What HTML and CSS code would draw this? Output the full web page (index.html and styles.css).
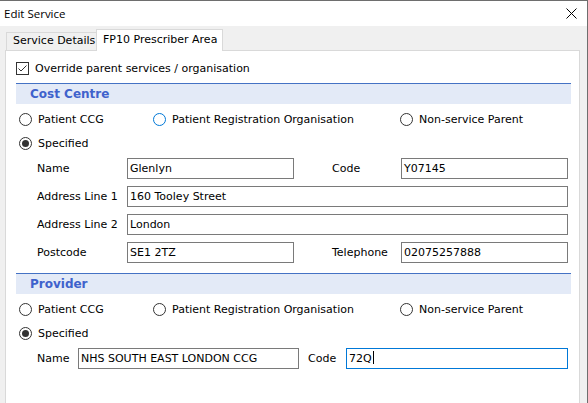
FILE: index.html
```html
<!DOCTYPE html>
<html>
<head>
<meta charset="utf-8">
<title>Edit Service</title>
<link rel="stylesheet" href="styles.css">
</head>
<body>
<div class="window">
  <div class="titlebar">
    <span class="title">Edit Service</span>
    <svg class="close" width="11" height="11" viewBox="0 0 11 11"><path d="M0.5 0.5 L10.5 10.5 M10.5 0.5 L0.5 10.5" stroke="#000" stroke-width="1" fill="none"/></svg>
  </div>
  <div class="client">
    <div class="tabs">
      <div class="tab">Service Details</div>
      <div class="tab active">FP10 Prescriber Area</div>
    </div>
    <div class="panel">
      <div class="check-row">
        <span class="checkbox"><svg width="11" height="11" viewBox="0 0 11 11"><path d="M1.5 5.5 L4 8 L9.5 2.5" stroke="#333" stroke-width="1" fill="none"/></svg></span>
        <span>Override parent services / organisation</span>
      </div>

      <div class="group-header first">Cost Centre</div>
      <div class="radio-row first">
        <div class="radio-item"><span class="radio"></span>Patient CCG</div>
        <div class="radio-item"><span class="radio hover"></span>Patient Registration Organisation</div>
        <div class="radio-item"><span class="radio"></span>Non-service Parent</div>
      </div>
      <div class="radio-row">
        <div class="radio-item"><span class="radio checked"></span>Specified</div>
      </div>
      <div class="fields cost">
        <span class="lbl">Name</span>
        <div class="input">Glenlyn</div>
        <span></span>
        <span class="lbl">Code</span>
        <div class="input">Y07145</div>

        <span class="lbl">Address Line 1</span>
        <div class="input wide">160 Tooley Street</div>

        <span class="lbl">Address Line 2</span>
        <div class="input wide">London</div>

        <span class="lbl">Postcode</span>
        <div class="input">SE1 2TZ</div>
        <span></span>
        <span class="lbl">Telephone</span>
        <div class="input">02075257888</div>
      </div>

      <div class="group-header second">Provider</div>
      <div class="radio-row first">
        <div class="radio-item"><span class="radio"></span>Patient CCG</div>
        <div class="radio-item"><span class="radio"></span>Patient Registration Organisation</div>
        <div class="radio-item"><span class="radio"></span>Non-service Parent</div>
      </div>
      <div class="radio-row">
        <div class="radio-item"><span class="radio checked"></span>Specified</div>
      </div>
      <div class="fields provider">
        <span class="lbl">Name</span>
        <div class="input">NHS SOUTH EAST LONDON CCG</div>
        <span></span>
        <span class="lbl">Code</span>
        <div class="input focused">72Q<span class="caret"></span></div>
      </div>
    </div>
  </div>
</div>
</body>
</html>
```
FILE: styles.css
```css
html, body {
  margin: 0;
  padding: 0;
}
body {
  width: 588px;
  height: 403px;
  overflow: hidden;
  font-family: "DejaVu Sans", sans-serif;
  font-size: 11px;
  color: #000;
  background: #f0f0f0;
}
.window {
  box-sizing: border-box;
  width: 588px;
  height: 403px;
  border-top: 1px solid #6e6e6e;
  border-right: 1px solid #6e6e6e;
  background: #f0f0f0;
  overflow: hidden;
}
.titlebar {
  height: 25px;
  background: #fff;
  display: flex;
  align-items: center;
  justify-content: space-between;
  padding: 0 10px 0 4px;
}
.title {
  font-family: "Open Sans", sans-serif;
  font-size: 11.5px;
}
.close {
  display: block;
}
.client {
  padding: 3px 7px 0 5px;
}
.tabs {
  display: flex;
  align-items: flex-end;
  height: 21px;
  padding-left: 1px;
}
.tab {
  box-sizing: border-box;
  height: 18px;
  line-height: 16px;
  padding-left: 6px;
  width: 90px;
  border: 1px solid #d9d9d9;
  border-right: none;
  border-bottom: none;
  background: #f0f0f0;
  white-space: nowrap;
}
.tab.active {
  height: 22px;
  line-height: 20px;
  width: 127px;
  border-right: 1px solid #d9d9d9;
  background: #fff;
  margin-bottom: -1px;
  position: relative;
  z-index: 1;
}
.panel {
  height: 400px;
  background: #fff;
  border: 1px solid #d9d9d9;
  padding: 11px 8px 0 10px;
}
.check-row {
  display: flex;
  align-items: center;
  height: 13px;
  gap: 6px;
}
.checkbox {
  box-sizing: border-box;
  width: 13px;
  height: 13px;
  border: 1px solid #333;
  background: #fff;
  display: flex;
}
.checkbox svg {
  display: block;
}
.group-header {
  box-sizing: border-box;
  height: 21px;
  border-top: 1px solid #4472c4;
  background: #e3eaf7;
  color: #3f62cc;
  font-weight: bold;
  font-size: 12px;
  line-height: 20px;
  padding-left: 14px;
}
.group-header.first {
  margin-top: 8px;
}
.group-header.second {
  margin-top: 10px;
}
.radio-row {
  display: grid;
  grid-template-columns: 134px 247px auto;
  height: 24px;
  align-items: center;
  padding-left: 3px;
}
.radio-row.first {
  margin-top: 3px;
}
.radio-item {
  display: flex;
  align-items: center;
  gap: 6px;
  white-space: nowrap;
}
.radio {
  box-sizing: border-box;
  width: 13px;
  height: 13px;
  border: 1px solid #333;
  border-radius: 50%;
  background: #fff;
  position: relative;
  flex: none;
}
.radio.hover {
  border-color: #0078d7;
}
.radio.checked::after {
  content: "";
  position: absolute;
  left: 2px;
  top: 2px;
  width: 7px;
  height: 7px;
  border-radius: 50%;
  background: #333;
}
.fields {
  display: grid;
  grid-auto-rows: 21px;
  row-gap: 7px;
  align-items: center;
  margin-top: 3px;
  padding-left: 21px;
}
.fields.cost {
  grid-template-columns: 90px 167px 38px 69px 167px;
}
.fields.provider {
  grid-template-columns: 41px 221px 9px 38px 222px;
}
.lbl {
  white-space: nowrap;
}
.input {
  box-sizing: border-box;
  height: 21px;
  border: 1px solid #7a7a7a;
  padding-left: 2px;
  line-height: 19px;
  white-space: nowrap;
  background: #fff;
}
.input.wide {
  grid-column: 2 / 6;
}
.input.focused {
  border-color: #0078d7;
}
.caret {
  display: inline-block;
  width: 1px;
  height: 13px;
  background: #000;
  vertical-align: -2px;
  margin-left: 1px;
}
```
